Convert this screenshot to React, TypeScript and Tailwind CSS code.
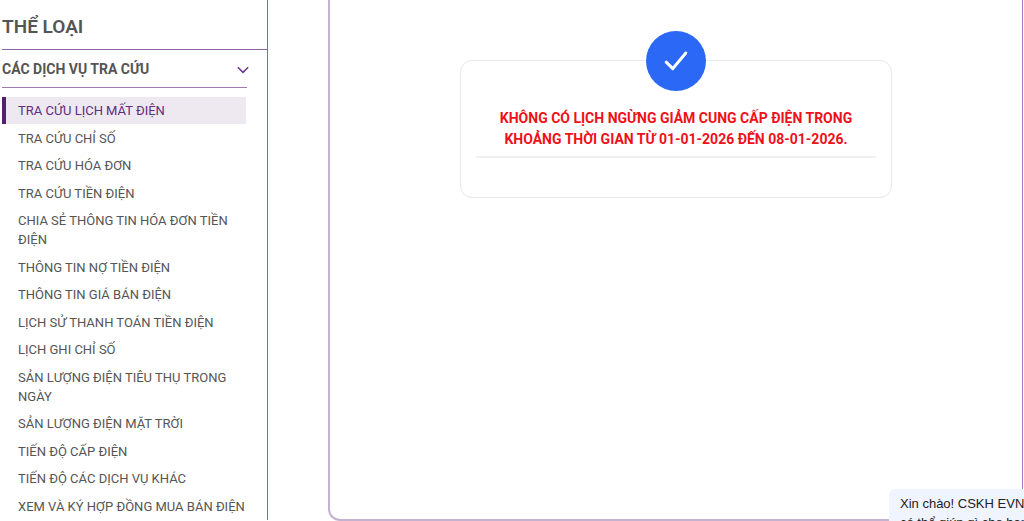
import { clsx } from 'clsx'

const services = [
  'Tra cứu lịch mất điện',
  'Tra cứu chỉ số',
  'Tra cứu hóa đơn',
  'Tra cứu tiền điện',
  'Chia sẻ thông tin hóa đơn tiền điện',
  'Thông tin nợ tiền điện',
  'Thông tin giá bán điện',
  'Lịch sử thanh toán tiền điện',
  'Lịch ghi chỉ số',
  'Sản lượng điện tiêu thụ trong ngày',
  'Sản lượng điện mặt trời',
  'Tiến độ cấp điện',
  'Tiến độ các dịch vụ khác',
  'Xem và ký hợp đồng mua bán điện',
]

function Sidebar() {
  return (
    <aside className="w-[268px] shrink-0 self-start border-r border-[#8a659f] pl-[2px] uppercase text-[#555]">
      <h2 className="border-b border-[#8a659f] pt-[13px] pb-2 text-[19px] leading-7 font-semibold">Thể loại</h2>

      {/* Category toggle */}
      <button
        type="button"
        aria-expanded="true"
        className="flex w-[245px] items-center justify-between border-b border-[#9c7bb0] pt-[9px] pb-[7px] text-left text-[14px] leading-[21px] font-bold uppercase"
      >
        Các dịch vụ tra cứu
        <svg className="mr-[-2px] h-3 w-3" viewBox="0 0 12 12" fill="none" stroke="#6b3588" strokeWidth="1.5" aria-hidden="true">
          <path d="M0.8 3.2 6 8.4l5.2-5.2" />
        </svg>
      </button>

      {/* Services */}
      <nav className="w-[244px] pt-[9px]">
        <ul className="flex min-h-[423px] flex-col justify-between text-[13px] leading-[19px]">
          {services.map((service, index) => (
            <li key={service}>
              <a
                href="#"
                aria-current={index === 0 ? 'page' : undefined}
                className={clsx(
                  'block border-l-4 py-1 pl-3',
                  index === 0 ? 'border-[#532070] bg-[#eee8f0] text-[#632c82]' : 'border-transparent'
                )}
              >
                {service}
              </a>
            </li>
          ))}
        </ul>
      </nav>
    </aside>
  )
}

function ResultCard() {
  return (
    <section className="relative mt-[60px] w-5/8 rounded-xl border border-[#e8e8e8] px-[15px] pt-[47px] pb-[39px]">
      {/* Status badge */}
      <div className="absolute -top-[30px] left-1/2 flex h-15 w-15 -translate-x-1/2 items-center justify-center rounded-full bg-[#2b68f6]">
        <svg className="h-6 w-6" viewBox="0 0 24 24" fill="none" stroke="white" strokeWidth="3" strokeLinecap="round" strokeLinejoin="round" aria-hidden="true">
          <path d="M2.2 13.2 8.8 19.6 21.8 4" />
        </svg>
      </div>
      <p className="border-b-2 border-[#f0f0f0] pb-1.5 text-center text-[14px] leading-[21px] font-bold uppercase text-[#ee1119]">
        Không có lịch ngừng giảm cung cấp điện trong
        <br />
        khoảng thời gian từ 01-01-2026 đến 08-01-2026.
      </p>
    </section>
  )
}

export default function App() {
  return (
    <div className="relative flex h-screen overflow-hidden bg-white font-['Roboto',sans-serif]">
      <Sidebar />
      <main className="mr-px ml-[60px] flex flex-1 items-start justify-center rounded-b-xl border-r border-b-2 border-l-2 border-r-[#a97fc0] border-b-[#c5b1d0] border-l-[#c5b1d0]">
        <ResultCard />
      </main>

      {/* Chat greeting */}
      <div className="absolute right-0 bottom-0 h-8 w-[135px] overflow-hidden rounded-tl-md bg-[#f0f4ff] pt-[5px] pl-[11px] font-['Liberation_Sans',sans-serif] text-[13px] leading-[19px] whitespace-nowrap text-[#222]">
        Xin chào! CSKH EVNS
        <br />
        có thể giúp gì cho bạn
      </div>
    </div>
  )
}
